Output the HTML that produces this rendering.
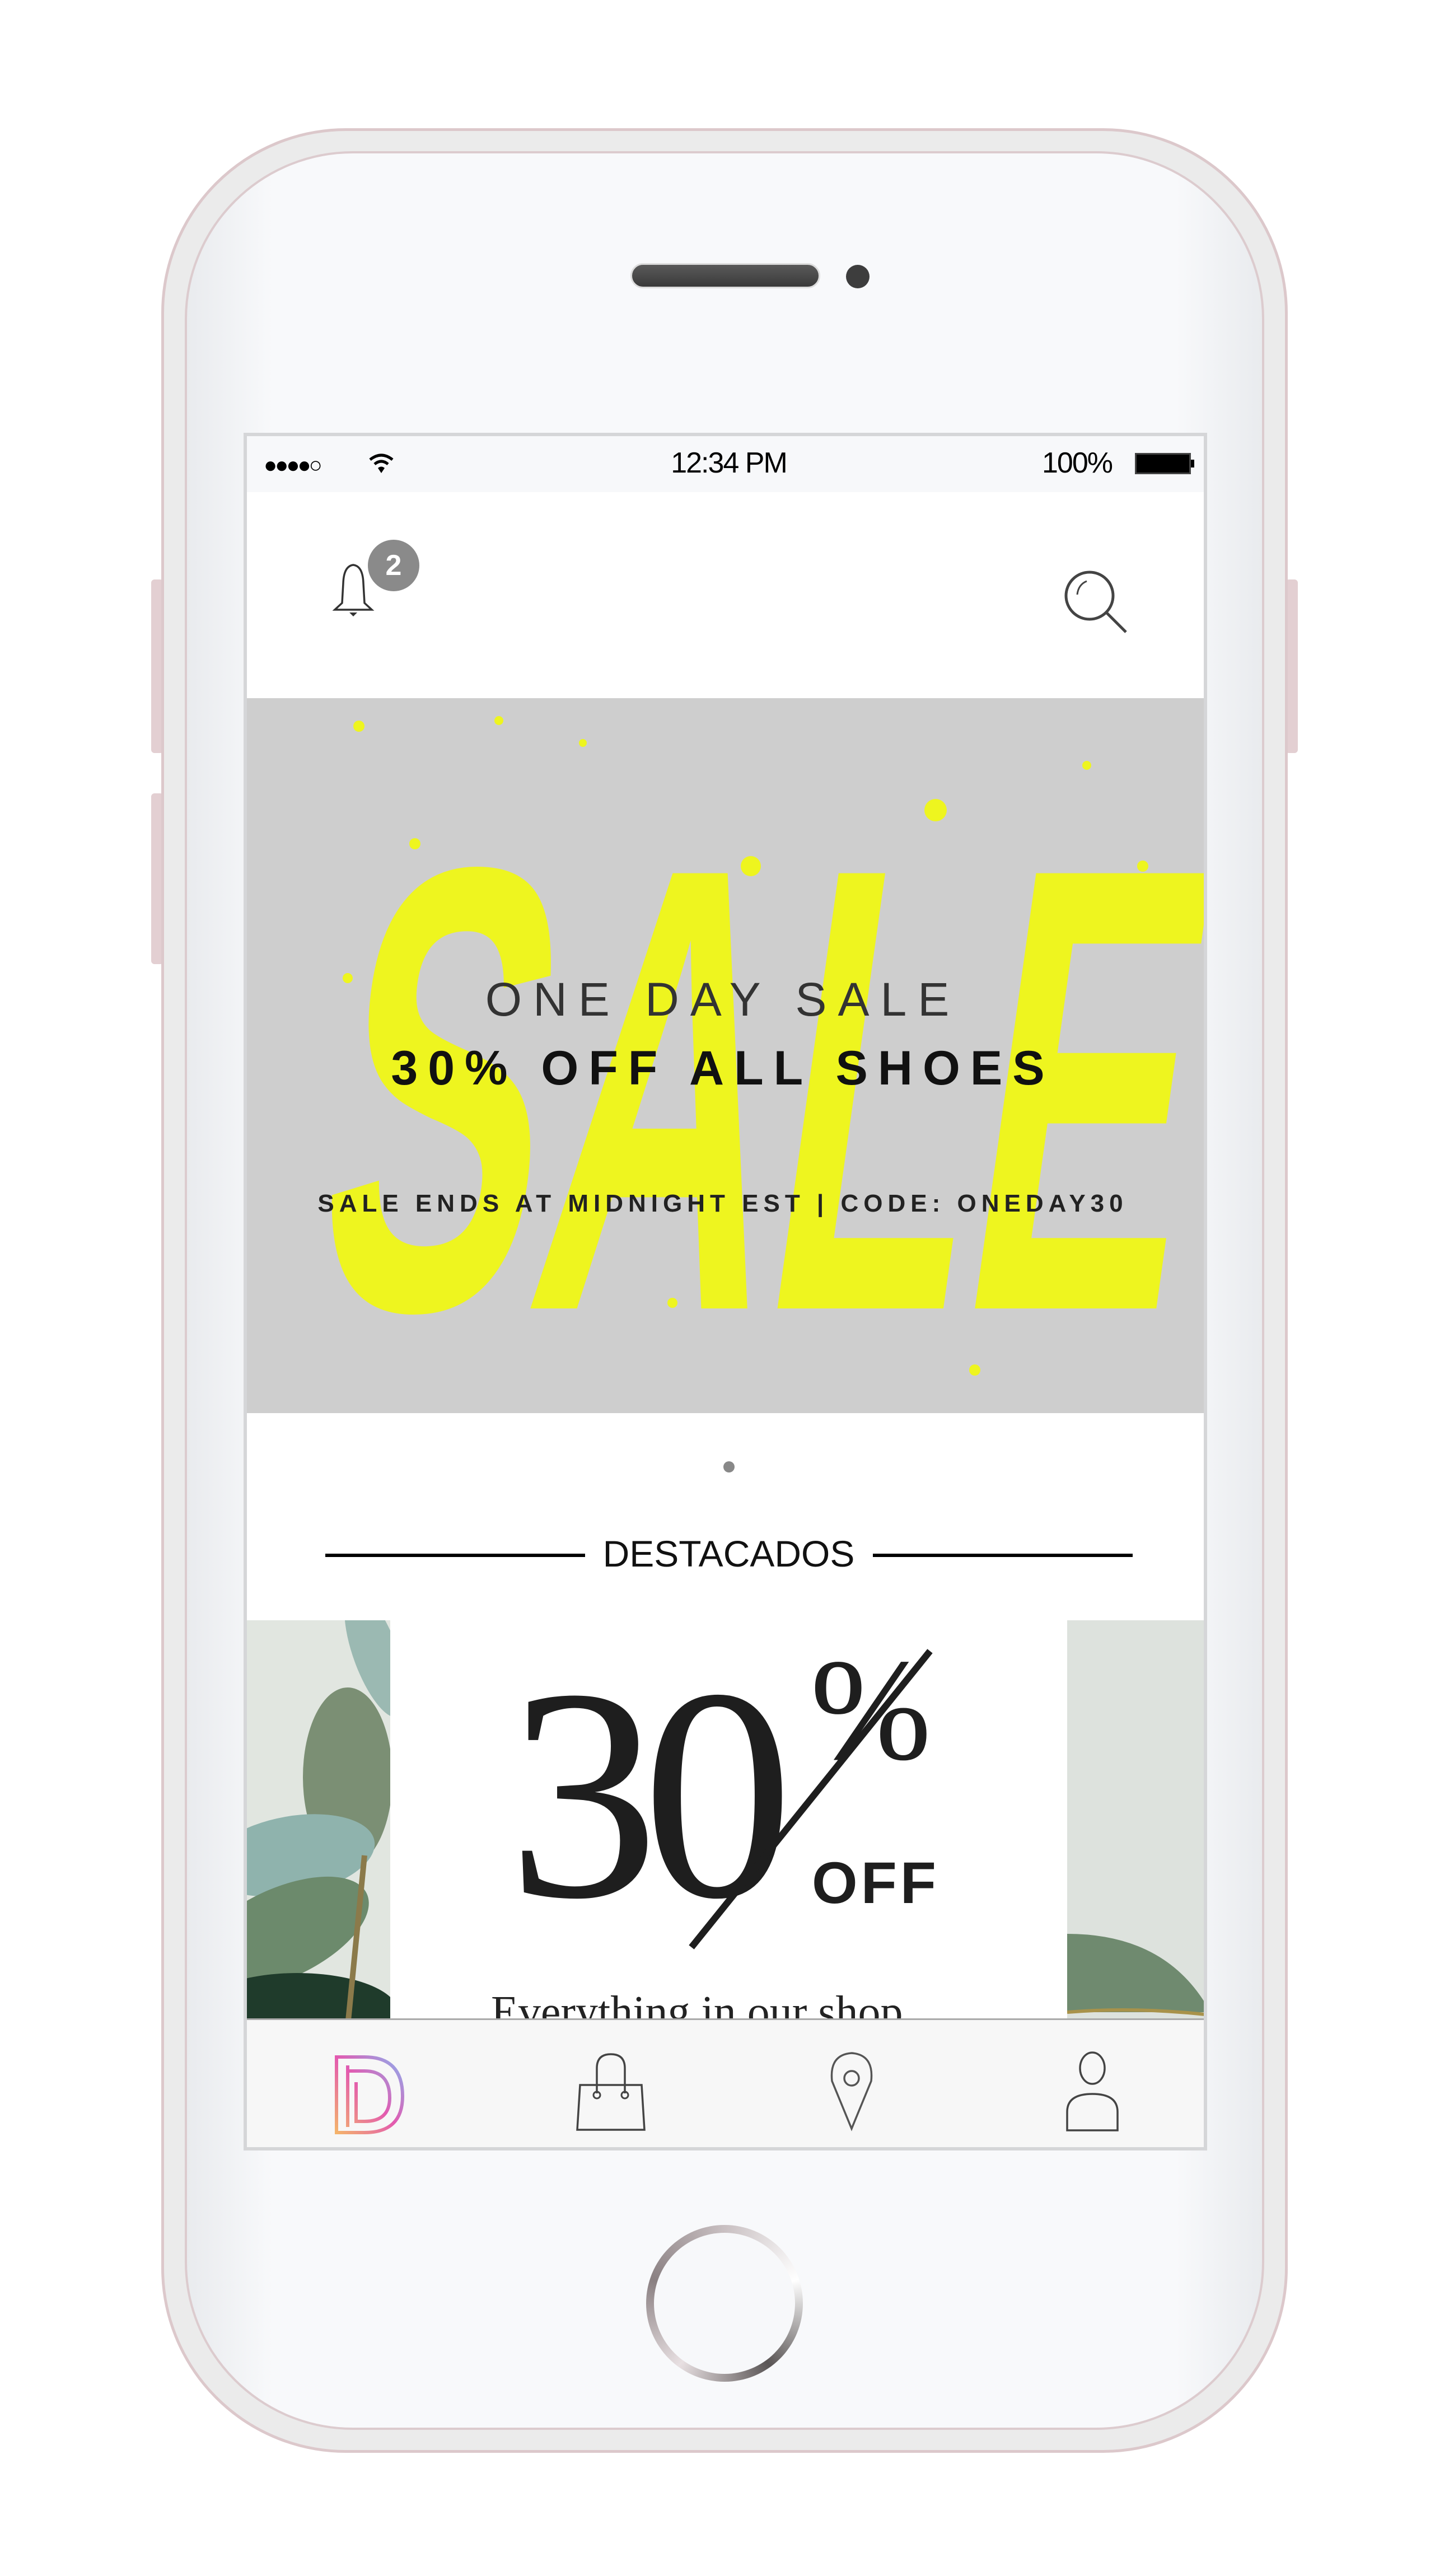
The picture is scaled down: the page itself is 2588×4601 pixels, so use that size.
<!DOCTYPE html>
<html><head><meta charset="utf-8"><style>
*{margin:0;padding:0;box-sizing:border-box}
body{width:2588px;height:4601px;background:#fff;position:relative;overflow:hidden;font-family:"Liberation Sans",sans-serif}
.abs{position:absolute}
</style></head><body>
<div class="abs" style="left:270px;top:1035px;width:22px;height:310px;background:#e3cfd2;border-radius:6px"></div>
<div class="abs" style="left:270px;top:1417px;width:22px;height:305px;background:#e3cfd2;border-radius:6px"></div>
<div class="abs" style="left:2296px;top:1035px;width:22px;height:310px;background:#e3cfd2;border-radius:6px"></div>
<div class="abs" style="left:288px;top:229px;width:2012px;height:4152px;border-radius:330px;background:#ebebeb;border:5px solid #dcc8cb"></div>
<div class="abs" style="left:330px;top:270px;width:1928px;height:4070px;border-radius:300px;background:linear-gradient(90deg,#e9ebee,#f8f9fb 8%,#f8f9fb 92%,#e9ebee);border:4px solid #dccbce"></div>
<div class="abs" style="left:1126px;top:470px;width:339px;height:45px;border-radius:23px;background:linear-gradient(#5a5a5a,#3a3a3a);border:3px solid #ddd"></div>
<div class="abs" style="left:1511px;top:473px;width:42px;height:42px;border-radius:50%;background:#3d3d3d"></div>
<div class="abs" style="left:435px;top:773px;width:1721px;height:3068px;background:#fff;border:6px solid #d5d6d8;overflow:hidden">
  <div class="abs" style="left:0;top:0;width:1721px;height:100px;background:#f7f8fa"></div>
  <div class="abs" style="left:30px;top:30px;font-size:40px;letter-spacing:-4px;color:#000">●●●●○</div>
  <svg class="abs" style="left:215px;top:24px" width="50" height="50" viewBox="0 0 50 50"><path d="M5 18 Q25 2 45 18" stroke="#000" stroke-width="5" fill="none"/><path d="M13 26 Q25 16 37 26" stroke="#000" stroke-width="5" fill="none"/><path d="M19 33 L25 42 L31 33 Q25 28 19 33Z" fill="#000"/></svg>
  <div class="abs" style="left:0;width:1721px;top:18px;text-align:center;font-size:52px;color:#000;letter-spacing:-2px">12:34 PM</div>
  <div class="abs" style="left:1420px;top:18px;font-size:52px;color:#000;letter-spacing:-2px">100%</div>
  <div class="abs" style="left:1586px;top:30px;width:100px;height:38px;background:#000;border:3px solid #444"></div>
  <div class="abs" style="left:1686px;top:42px;width:6px;height:14px;background:#000"></div>
  <svg class="abs" style="left:145px;top:218px" width="90" height="110" viewBox="0 0 90 110"><path d="M45 12 Q28 14 27 45 L25 80 L12 92 L78 92 L65 80 L63 45 Q62 14 45 12Z" stroke="#333" stroke-width="3.5" fill="none"/><path d="M38 97 L52 97 L45 104Z" fill="#333"/></svg>
  <div class="abs" style="left:216px;top:185px;width:92px;height:92px;border-radius:50%;background:#8a8a8a;color:#fff;font-weight:bold;font-size:52px;text-align:center;line-height:92px">2</div>
  <svg class="abs" style="left:1455px;top:235px" width="125" height="125" viewBox="0 0 125 125"><circle cx="50" cy="50" r="42" stroke="#444" stroke-width="5" fill="none"/><path d="M80 80 L115 115" stroke="#444" stroke-width="5"/><path d="M28 48 Q30 30 45 24" stroke="#444" stroke-width="3" fill="none"/></svg>
  <div class="abs" style="left:0;top:468px;width:1721px;height:1277px;background:#cecece;overflow:hidden">
    <svg width="1721" height="1277" class="abs" style="left:0;top:0">
      <g fill="#eef51f">
        <circle cx="200" cy="50" r="10"/><circle cx="450" cy="40" r="8"/><circle cx="600" cy="80" r="7"/><circle cx="1230" cy="200" r="20"/><circle cx="900" cy="300" r="18"/><circle cx="300" cy="260" r="10"/><circle cx="1500" cy="120" r="8"/><circle cx="1100" cy="1020" r="12"/><circle cx="760" cy="1080" r="9"/><circle cx="1300" cy="1200" r="10"/><circle cx="180" cy="500" r="9"/><circle cx="1600" cy="300" r="10"/>
      </g>
      <text x="260" y="1090" font-family="Liberation Sans" font-weight="bold" font-size="1130" fill="#eef51f" transform="skewX(-8)" textLength="1540" lengthAdjust="spacingAndGlyphs">SALE</text>
    </svg>
    <div class="abs" style="left:0;width:1700px;top:490px;text-align:center;font-size:84px;letter-spacing:20px;color:#333">ONE DAY SALE</div>
    <div class="abs" style="left:0;width:1700px;top:612px;text-align:center;font-size:86px;font-weight:bold;letter-spacing:18px;color:#111">30% OFF ALL SHOES</div>
    <div class="abs" style="left:0;width:1700px;top:878px;text-align:center;font-size:44px;font-weight:bold;letter-spacing:9px;color:#222">SALE ENDS AT MIDNIGHT EST | CODE: ONEDAY30</div>
  </div>
  <div class="abs" style="left:851px;top:1831px;width:20px;height:20px;border-radius:50%;background:#888"></div>
  <div class="abs" style="left:140px;top:1996px;width:464px;height:6px;background:#000"></div>
  <div class="abs" style="left:1118px;top:1996px;width:464px;height:6px;background:#000"></div>
  <div class="abs" style="left:0;width:1721px;top:1958px;text-align:center;font-size:66px;color:#111">DESTACADOS</div>
  <svg class="abs" style="left:0;top:2115px" width="256" height="725" viewBox="0 0 256 725">
    <rect width="256" height="725" fill="#e1e6e0"/>
    <ellipse cx="230" cy="60" rx="40" ry="120" fill="#9bb9b2" transform="rotate(-20 230 60)"/>
    <ellipse cx="180" cy="280" rx="80" ry="160" fill="#7b8f74"/>
    <ellipse cx="80" cy="420" rx="150" ry="70" fill="#8fb3ad" transform="rotate(-10 80 420)"/>
    <ellipse cx="60" cy="560" rx="170" ry="80" fill="#6c8a6c" transform="rotate(-25 60 560)"/>
    <ellipse cx="90" cy="700" rx="180" ry="70" fill="#1f3b2b"/>
    <path d="M210 420 L180 725" stroke="#8b7a4a" stroke-width="10"/>
  </svg>
  <svg class="abs" style="left:1465px;top:2115px" width="256" height="725" viewBox="0 0 256 725">
    <rect width="256" height="725" fill="#dde2dd"/>
    <path d="M0 560 Q180 560 256 700 L0 700Z" fill="#6f8a6f"/>
    <path d="M0 700 Q120 690 256 705" stroke="#a8924a" stroke-width="6" fill="none"/>
  </svg>
  <div class="abs" style="left:256px;top:2115px;width:1209px;height:725px;background:#fff;overflow:hidden">
    <div class="abs" style="left:210px;top:40px;font-family:'Liberation Serif',serif;font-size:540px;color:#1e1e1e;letter-spacing:-30px;line-height:1">30</div>
    <svg class="abs" style="left:0;top:0" width="1209" height="725"><path d="M964 55 L538 584" stroke="#1e1e1e" stroke-width="12"/></svg>
    <div class="abs" style="left:750px;top:30px;font-family:'Liberation Serif',serif;font-size:260px;color:#1e1e1e;line-height:1">%</div>
    <div class="abs" style="left:753px;top:410px;font-size:105px;font-weight:bold;color:#1e1e1e;letter-spacing:6px">OFF</div>
    <div class="abs" style="left:180px;top:655px;font-family:'Liberation Serif',serif;font-size:80px;color:#222">Everything in our shop</div>
  </div>
  <div class="abs" style="left:0;top:2826px;width:1721px;height:240px;background:#f7f7f7;border-top:3px solid #aaa"></div>
  <svg class="abs" style="left:150px;top:2880px" width="140" height="160" viewBox="0 0 140 160"><defs><linearGradient id="g" x1="0" y1="1" x2="1" y2="0"><stop offset="0" stop-color="#f4b36b"/><stop offset=".5" stop-color="#e35ab0"/><stop offset="1" stop-color="#8ab0f0"/></linearGradient></defs><path d="M10 15 L60 15 Q128 15 128 85 Q128 150 60 150 L10 150Z M30 30 L30 140 M30 40 L60 40 Q105 40 105 88 Q105 130 60 130 L45 130 L45 60" stroke="url(#g)" stroke-width="6" fill="none"/></svg>
  <svg class="abs" style="left:580px;top:2885px" width="140" height="150" viewBox="0 0 140 150"><path d="M15 60 L125 60 L130 140 L10 140Z" stroke="#444" stroke-width="3.5" fill="none"/><path d="M45 75 L45 30 Q45 5 70 5 Q95 5 95 30 L95 75" stroke="#444" stroke-width="3.5" fill="none"/><circle cx="45" cy="78" r="6" stroke="#444" stroke-width="3" fill="none"/><circle cx="95" cy="78" r="6" stroke="#444" stroke-width="3" fill="none"/></svg>
  <svg class="abs" style="left:1030px;top:2883px" width="100" height="150" viewBox="0 0 100 150"><path d="M50 140 L15 55 Q10 8 50 5 Q90 8 85 55Z" stroke="#555" stroke-width="3.5" fill="none"/><circle cx="50" cy="50" r="13" stroke="#555" stroke-width="3.5" fill="none"/></svg>
  <svg class="abs" style="left:1450px;top:2883px" width="120" height="150" viewBox="0 0 120 150"><ellipse cx="60" cy="32" rx="22" ry="28" stroke="#444" stroke-width="3.5" fill="none"/><path d="M15 143 L15 110 Q15 78 60 78 Q105 78 105 110 L105 143Z" stroke="#444" stroke-width="3.5" fill="none"/></svg>
</div>
<div class="abs" style="left:1154px;top:3974px;width:280px;height:280px;border-radius:50%;background:conic-gradient(#c9c0c2,#fff,#5a5555,#e8e0e2,#8a8082,#c9c0c2);"></div>
<div class="abs" style="left:1168px;top:3988px;width:252px;height:252px;border-radius:50%;background:#f7f8fa"></div>
</body></html>
